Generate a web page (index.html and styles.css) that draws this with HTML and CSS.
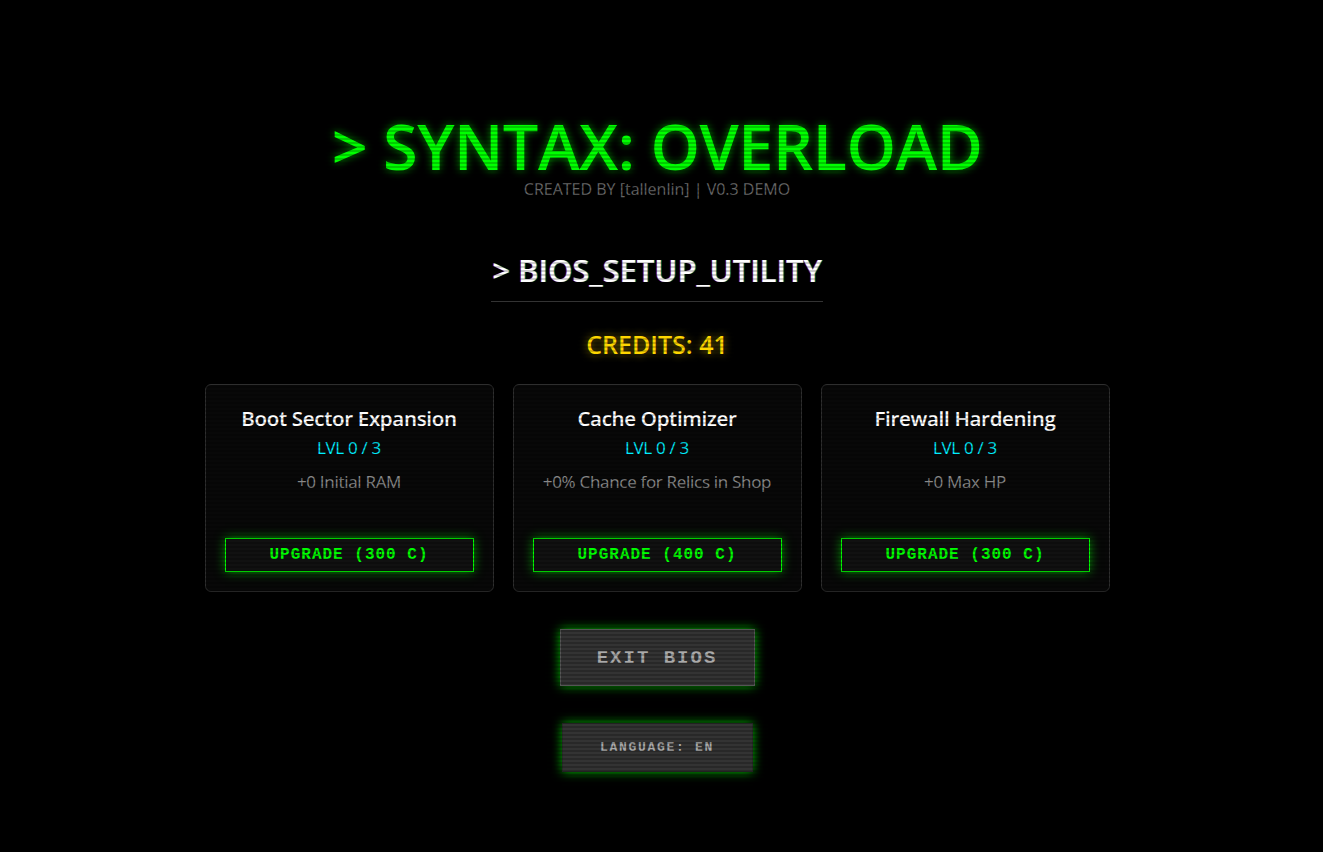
FILE: index.html
```html
<!DOCTYPE html>
<html lang="en">
<head>
    <meta charset="UTF-8">
    <meta name="viewport" content="width=device-width, initial-scale=1.0">
    <title>Syntax: Overload</title>
    <link rel="stylesheet" href="styles.css">
</head>
<body>
    <div class="screen">
        <header class="header">
            <h1 class="game-title">&gt; SYNTAX: OVERLOAD</h1>
            <div class="credits-line">CREATED BY [tallenlin] | V0.3 DEMO</div>
        </header>

        <section class="bios">
            <h2 class="bios-title">&gt; BIOS_SETUP_UTILITY</h2>
            <div class="bios-credits">CREDITS: 41</div>

            <div class="upgrade-grid">
                <div class="upgrade-card">
                    <h3 class="upgrade-name">Boot Sector Expansion</h3>
                    <div class="upgrade-level">LVL 0 / 3</div>
                    <div class="upgrade-desc">+0 Initial RAM</div>
                    <button class="upgrade-btn">UPGRADE (300 C)</button>
                </div>
                <div class="upgrade-card">
                    <h3 class="upgrade-name">Cache Optimizer</h3>
                    <div class="upgrade-level">LVL 0 / 3</div>
                    <div class="upgrade-desc">+0% Chance for Relics in Shop</div>
                    <button class="upgrade-btn">UPGRADE (400 C)</button>
                </div>
                <div class="upgrade-card">
                    <h3 class="upgrade-name">Firewall Hardening</h3>
                    <div class="upgrade-level">LVL 0 / 3</div>
                    <div class="upgrade-desc">+0 Max HP</div>
                    <button class="upgrade-btn">UPGRADE (300 C)</button>
                </div>
            </div>

            <button class="menu-btn exit-btn">EXIT BIOS</button>
            <button class="menu-btn lang-btn">LANGUAGE: EN</button>
        </section>
    </div>
</body>
</html>
```

FILE: styles.css
```css
html, body {
    margin: 0;
    padding: 0;
    background-color: #000;
}
body {
    font-family: 'Open Sans', 'Noto Sans', sans-serif;
    color: #fff;
    min-height: 100vh;
}
body::after {
    content: "";
    position: fixed;
    inset: 0;
    pointer-events: none;
    background: repeating-linear-gradient(to bottom, rgba(0, 0, 0, 0) 0, rgba(0, 0, 0, 0) 2px, rgba(0, 0, 0, 0.2) 2px, rgba(0, 0, 0, 0.2) 4px);
}
.screen {
    display: flex;
    flex-direction: column;
    align-items: center;
    padding-top: 111px;
    padding-right: 9px;
}
.header {
    text-align: center;
}
.game-title {
    margin: 0;
    font-size: 63px;
    font-weight: 600;
    line-height: 70px;
    color: #00ff00;
    letter-spacing: -0.5px;
    text-shadow: 0 0 8px rgba(0, 255, 0, 0.6);
}
.credits-line {
    font-size: 16px;
    line-height: 16px;
    color: #666;
}
.bios {
    display: flex;
    flex-direction: column;
    align-items: center;
    margin-top: 52px;
}
.bios-title {
    margin: 0;
    padding: 0 1px 10px;
    font-size: 31px;
    font-weight: 600;
    line-height: 42px;
    border-bottom: 1px solid #333;
    text-shadow: -1px 0 rgba(255, 0, 80, 0.5), 1px 0 rgba(0, 255, 255, 0.5);
}
.bios-credits {
    margin-top: 23px;
    font-size: 25px;
    font-weight: 600;
    line-height: 38px;
    color: #ffd700;
    text-shadow: 0 0 8px rgba(255, 215, 0, 0.6);
}
.upgrade-grid {
    display: grid;
    grid-template-columns: repeat(3, 289px);
    gap: 19px;
    margin-top: 21px;
}
.upgrade-card {
    display: flex;
    flex-direction: column;
    align-items: center;
    height: 208px;
    box-sizing: border-box;
    padding: 19px;
    background-color: #080808;
    border: 1px solid #2e2e2e;
    border-radius: 6px;
    text-align: center;
}
.upgrade-name {
    margin: 0;
    font-size: 20.5px;
    font-weight: 600;
    line-height: 28px;
    letter-spacing: -0.3px;
}
.upgrade-level {
    margin-top: 5px;
    font-size: 17px;
    line-height: 22px;
    color: #00eeff;
    letter-spacing: -0.3px;
}
.upgrade-desc {
    margin-top: 12px;
    font-size: 17px;
    line-height: 22px;
    color: #888;
    letter-spacing: -0.3px;
}
.upgrade-btn {
    margin-top: auto;
    width: 100%;
    height: 34px;
    background-color: #111;
    border: 1px solid #00ff00;
    color: #00ff00;
    font-family: 'Liberation Mono', 'Courier New', monospace;
    font-size: 16px;
    font-weight: 700;
    letter-spacing: 1px;
    box-shadow: 0 0 10px rgba(0, 255, 0, 0.55);
    cursor: pointer;
}
.menu-btn {
    background-color: #333;
    color: #aaa;
    font-family: 'Liberation Mono', 'Courier New', monospace;
    font-weight: 700;
    box-shadow: 0 0 10px rgba(0, 255, 0, 0.75);
    cursor: pointer;
}
.exit-btn {
    margin-top: 37px;
    width: 195px;
    height: 57px;
    border: 1px solid #555;
    font-size: 19px;
    letter-spacing: 2px;
}
.lang-btn {
    margin-top: 37px;
    width: 191px;
    height: 49px;
    border: 1px solid #2a2a2a;
    font-size: 13px;
    letter-spacing: 1.7px;
}
```
